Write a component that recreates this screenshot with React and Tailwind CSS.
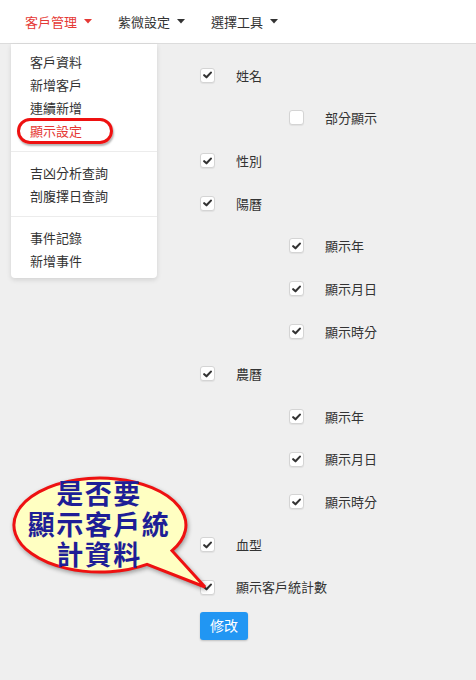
const font = { fontFamily: '"Noto Sans CJK TC", "Noto Sans", sans-serif' };

const navItems = ["客戶管理", "紫微設定", "選擇工具"];

const menuGroups = [
  ["客戶資料", "新增客戶", "連續新增", "顯示設定"],
  ["吉凶分析查詢", "剖腹擇日查詢"],
  ["事件記錄", "新增事件"],
];

const options = [
  { label: "姓名", level: 0, checked: true },
  { label: "部分顯示", level: 1, checked: false },
  { label: "性別", level: 0, checked: true },
  { label: "陽曆", level: 0, checked: true },
  { label: "顯示年", level: 1, checked: true },
  { label: "顯示月日", level: 1, checked: true },
  { label: "顯示時分", level: 1, checked: true },
  { label: "農曆", level: 0, checked: true },
  { label: "顯示年", level: 1, checked: true },
  { label: "顯示月日", level: 1, checked: true },
  { label: "顯示時分", level: 1, checked: true },
  { label: "血型", level: 0, checked: true },
  { label: "顯示客戶統計數", level: 0, checked: true },
];

const Caret = () => (
  <svg width="8" height="5" viewBox="0 0 8 5" className="ml-[7px]">
    <path d="M0 0 L8 0 L4 4.5 Z" fill="currentColor" />
  </svg>
);

const Checkbox = ({ checked }) => (
  <span className="flex h-[15px] w-[15px] items-center justify-center rounded-[3px] border border-[#d4d4d4] bg-white shadow-[0_1px_1px_rgba(0,0,0,0.06)]">
    {checked && (
      <svg width="9" height="8" viewBox="0 0 9 8">
        <path d="M1.2 4.2 L3.5 6.3 L7.9 1.6" fill="none" stroke="#333" strokeWidth="2.1" strokeLinecap="round" strokeLinejoin="round" />
      </svg>
    )}
  </span>
);

// speech bubble annotation over the form
const Bubble = () => (
  <div className="pointer-events-none absolute left-0 top-[470px] h-[130px] w-[220px]">
    <svg width="220" height="130" viewBox="0 0 220 130" className="absolute left-0 top-0 drop-shadow-[1px_2px_2px_rgba(0,0,0,0.35)]">
      <path
        d="M172 80.7 A86 47 0 1 0 147 94.4 L205 117 Z"
        fill="#ffffc2"
        stroke="#ee1111"
        strokeWidth="3"
        strokeLinejoin="miter"
      />
    </svg>
    <div className="absolute left-0 top-[8px] w-[198px] text-center text-[27px] font-bold leading-[30.5px] tracking-[1.5px] text-[#1e1e96]" style={font}>
      <div>是否要</div>
      <div>顯示客戶統</div>
      <div>計資料</div>
    </div>
  </div>
);

export default function App() {
  return (
    <div className="relative min-h-[680px] w-full bg-[#efefef] text-[13px] text-[#333]" style={font}>
      <nav className="flex h-[44px] items-center border-b border-[#dcdcdc] bg-white pl-[25px]">
        <div className="flex items-center gap-[26px]">
          {navItems.map((item, i) => (
            <div key={item} className={`flex items-center ${i === 0 ? "text-[#e53935]" : "text-[#333]"}`}>
              <span>{item}</span>
              <Caret />
            </div>
          ))}
        </div>
      </nav>

      {/* dropdown of 客戶管理 */}
      <div className="absolute left-[11px] top-[44px] w-[146px] rounded-b-[4px] bg-white pt-[6px] pb-[6px] shadow-[0_2px_5px_rgba(0,0,0,0.12)]">
        {menuGroups.map((group, gi) => (
          <div key={gi}>
            {gi > 0 && <div className="my-[9px] h-px bg-[#ececec]" />}
            {group.map((item) => (
              <div key={item} className="relative flex h-[23px] items-center pl-[19px]">
                {item === "顯示設定" ? (
                  <>
                    <span className="text-[#e53935]">{item}</span>
                    <span className="absolute left-[6px] top-[-1px] h-[26px] w-[96px] rounded-[13px] border-[3px] border-[#ee1111] shadow-[1px_2px_2px_rgba(0,0,0,0.3)]" />
                  </>
                ) : (
                  <span>{item}</span>
                )}
              </div>
            ))}
          </div>
        ))}
      </div>

      <div className="pl-[200px] pt-[10px]">
        {options.map((opt, i) => (
          <div key={i} className={`flex h-[42.67px] items-center ${opt.level ? "pl-[89px]" : ""}`}>
            <Checkbox checked={opt.checked} />
            <span className="ml-[21px]">{opt.label}</span>
          </div>
        ))}
        <button className="mt-[3px] flex h-[28px] w-[48px] items-center justify-center rounded-[3px] bg-[#2196f3] text-[14px] text-white shadow-[0_1px_2px_rgba(0,0,0,0.2)]">
          修改
        </button>
      </div>

      <Bubble />
    </div>
  );
}
